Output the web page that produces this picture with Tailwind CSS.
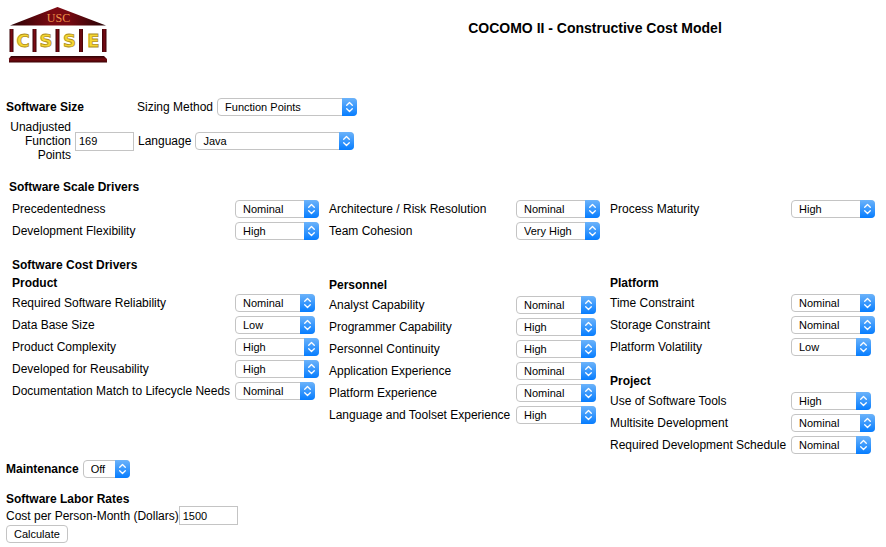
<!DOCTYPE html>
<html lang="en">
<head>
<meta charset="utf-8">
<meta name="viewport" content="width=device-width, initial-scale=1">
<title>COCOMO II - Constructive Cost Model</title>
<script src="https://cdn.jsdelivr.net/npm/@tailwindcss/browser@4"></script>
</head>
<body class="bg-white text-black font-['Liberation_Sans',Arial,sans-serif] text-[12px] leading-[14px]">

<svg class="absolute h-0 w-0" aria-hidden="true">
  <defs>
    <linearGradient id="blue" x1="0" y1="0" x2="0" y2="1"><stop offset="0" stop-color="#6cb3fa"/><stop offset="1" stop-color="#067dff"/></linearGradient>
  </defs>
  <symbol id="arrows" viewBox="0 0 15 18">
    <path d="M0 0h11a4 4 0 0 1 4 4v10a4 4 0 0 1-4 4H0z" fill="url(#blue)"/>
    <path d="M4.700 7.300 7.500 4.500l2.800 2.800M4.700 10.700l2.800 2.800 2.800-2.800" fill="none" stroke="#fff" stroke-width="1.300" stroke-linecap="round" stroke-linejoin="round"/>
  </symbol>
</svg>

<form>
<header class="flex items-start px-2 pt-1.5">
  <svg class="h-[58px] w-[100px] shrink-0" viewBox="8 6 100 58" role="img" aria-label="USC CSSE">
    <defs>
      <linearGradient id="roof" x1="0" y1="0" x2="1" y2="0"><stop offset="0" stop-color="#2a0205"/><stop offset=".45" stop-color="#7c0a12"/><stop offset=".6" stop-color="#780a12"/><stop offset="1" stop-color="#240204"/></linearGradient>
      <linearGradient id="base" x1="0" y1="0" x2="0" y2="1"><stop offset="0" stop-color="#2c0205"/><stop offset=".5" stop-color="#780a10"/><stop offset="1" stop-color="#3c0306"/></linearGradient>
      <linearGradient id="pillar" x1="0" y1="0" x2="1" y2="0"><stop offset="0" stop-color="#3a0408"/><stop offset=".5" stop-color="#7a0a12"/><stop offset="1" stop-color="#3a0408"/></linearGradient>
    </defs>
    <path d="M10 25.500 57.500 7 106 25.500z" fill="url(#roof)"/>
    <text x="58.500" y="22" text-anchor="middle" font-family="Liberation Serif" font-size="12" fill="#f0934a">USC</text>
    <g fill="url(#pillar)">
      <rect x="9.500" y="29" width="4" height="23"/><rect x="32.500" y="29" width="4" height="23"/><rect x="55.500" y="29" width="4" height="23"/><rect x="79" y="29" width="4" height="23"/><rect x="102" y="29" width="4.500" height="23"/>
    </g>
    <path d="M11 56h93l3 3v3.500H9V58.500z" fill="url(#base)"/>
    <g font-family="DejaVu Sans" font-weight="bold" font-size="18" text-anchor="middle" fill="#f5d631" stroke="#b0901c" stroke-width=".8">
      <text x="23" y="46.500">C</text><text x="46" y="46.500">S</text><text x="69.500" y="46.500">S</text><text x="93.500" y="46.500">E</text>
    </g>
  </svg>
  <h1 class="flex-1 pt-3.5 pl-60 pr-9 text-center text-[14px] leading-4 font-bold">COCOMO II - Constructive Cost Model</h1>
</header>

<section class="mt-[34px] px-1.5">
  <div class="flex items-center">
    <h2 class="w-[131px] font-bold">Software Size</h2>
    <label for="sizing" class="pr-1">Sizing Method</label>
    <span class="relative flex w-[140px]"><select id="sizing" class="h-[18px] w-full appearance-none rounded-[4px] border border-[#c4c4c4] bg-white pl-[7px] text-[11px] leading-4"><option>Function Points</option><option>Source Lines of Code</option></select><svg class="pointer-events-none absolute top-0 right-0 h-[18px] w-[15px]"><use href="#arrows"/></svg></span>
  </div>
  <div class="mt-1 flex items-center">
    <label for="ufp" class="w-[65px] text-right">Unadjusted Function Points</label>
    <input id="ufp" value="169" class="ml-1 h-[19px] w-[59px] border border-[#c4c4c4] pl-[3px] text-[11px]">
    <label for="lang" class="pr-1 pl-1">Language</label>
    <span class="relative flex w-[159px]"><select id="lang" class="h-[18px] w-full appearance-none rounded-[4px] border border-[#c4c4c4] bg-white pl-[7px] text-[11px] leading-4"><option>Java</option><option>C</option></select><svg class="pointer-events-none absolute top-0 right-0 h-[18px] w-[15px]"><use href="#arrows"/></svg></span>
  </div>
</section>

<section class="mt-[18px] pr-[11px] pl-3">
  <h2 class="-ml-[3px] font-bold">Software Scale Drivers</h2>
  <div class="mt-1 grid grid-cols-[307fr_271fr_265fr] gap-x-2.5">
    <div class="grid h-[22px] grid-cols-[1fr_84px] items-center"><label for="prec">Precedentedness</label><span class="relative flex w-[84px]"><select id="prec" data-rating class="h-[18px] w-full appearance-none rounded-[4px] border border-[#c4c4c4] bg-white pl-[7px] text-[11px] leading-4"><option>Nominal</option></select><svg class="pointer-events-none absolute top-0 right-0 h-[18px] w-[15px]"><use href="#arrows"/></svg></span></div>
    <div class="grid h-[22px] grid-cols-[1fr_84px] items-center"><label for="resl">Architecture / Risk Resolution</label><span class="relative flex w-[84px]"><select id="resl" data-rating class="h-[18px] w-full appearance-none rounded-[4px] border border-[#c4c4c4] bg-white pl-[7px] text-[11px] leading-4"><option>Nominal</option></select><svg class="pointer-events-none absolute top-0 right-0 h-[18px] w-[15px]"><use href="#arrows"/></svg></span></div>
    <div class="grid h-[22px] grid-cols-[1fr_84px] items-center"><label for="pmat">Process Maturity</label><span class="relative flex w-[84px]"><select id="pmat" data-rating class="h-[18px] w-full appearance-none rounded-[4px] border border-[#c4c4c4] bg-white pl-[7px] text-[11px] leading-4"><option>High</option></select><svg class="pointer-events-none absolute top-0 right-0 h-[18px] w-[15px]"><use href="#arrows"/></svg></span></div>
    <div class="grid h-[22px] grid-cols-[1fr_84px] items-center"><label for="flex">Development Flexibility</label><span class="relative flex w-[84px]"><select id="flex" data-rating class="h-[18px] w-full appearance-none rounded-[4px] border border-[#c4c4c4] bg-white pl-[7px] text-[11px] leading-4"><option>High</option></select><svg class="pointer-events-none absolute top-0 right-0 h-[18px] w-[15px]"><use href="#arrows"/></svg></span></div>
    <div class="grid h-[22px] grid-cols-[1fr_84px] items-center"><label for="team">Team Cohesion</label><span class="relative flex w-[84px]"><select id="team" data-rating class="h-[18px] w-full appearance-none rounded-[4px] border border-[#c4c4c4] bg-white pl-[7px] text-[11px] leading-4"><option>Very High</option></select><svg class="pointer-events-none absolute top-0 right-0 h-[18px] w-[15px]"><use href="#arrows"/></svg></span></div>
  </div>
</section>

<section class="mt-4 pr-[11px] pl-3">
  <h2 class="font-bold">Software Cost Drivers</h2>
  <div class="grid grid-cols-[307fr_271fr_265fr] gap-x-2.5">
    <div class="pt-1">
      <h3 class="mb-0.5 font-bold">Product</h3>
      <div class="grid h-[22px] grid-cols-[1fr_84px] items-center"><label for="rely">Required Software Reliability</label><span class="relative flex w-[80px]"><select id="rely" data-rating class="h-[18px] w-full appearance-none rounded-[4px] border border-[#c4c4c4] bg-white pl-[7px] text-[11px] leading-4"><option>Nominal</option></select><svg class="pointer-events-none absolute top-0 right-0 h-[18px] w-[15px]"><use href="#arrows"/></svg></span></div>
      <div class="grid h-[22px] grid-cols-[1fr_84px] items-center"><label for="data">Data Base Size</label><span class="relative flex w-[80px]"><select id="data" data-rating class="h-[18px] w-full appearance-none rounded-[4px] border border-[#c4c4c4] bg-white pl-[7px] text-[11px] leading-4"><option>Low</option></select><svg class="pointer-events-none absolute top-0 right-0 h-[18px] w-[15px]"><use href="#arrows"/></svg></span></div>
      <div class="grid h-[22px] grid-cols-[1fr_84px] items-center"><label for="cplx">Product Complexity</label><span class="relative flex w-[84px]"><select id="cplx" data-rating class="h-[18px] w-full appearance-none rounded-[4px] border border-[#c4c4c4] bg-white pl-[7px] text-[11px] leading-4"><option>High</option></select><svg class="pointer-events-none absolute top-0 right-0 h-[18px] w-[15px]"><use href="#arrows"/></svg></span></div>
      <div class="grid h-[22px] grid-cols-[1fr_84px] items-center"><label for="ruse">Developed for Reusability</label><span class="relative flex w-[84px]"><select id="ruse" data-rating class="h-[18px] w-full appearance-none rounded-[4px] border border-[#c4c4c4] bg-white pl-[7px] text-[11px] leading-4"><option>High</option></select><svg class="pointer-events-none absolute top-0 right-0 h-[18px] w-[15px]"><use href="#arrows"/></svg></span></div>
      <div class="grid h-[22px] grid-cols-[1fr_84px] items-center"><label for="docu">Documentation Match to Lifecycle Needs</label><span class="relative flex w-[80px]"><select id="docu" data-rating class="h-[18px] w-full appearance-none rounded-[4px] border border-[#c4c4c4] bg-white pl-[7px] text-[11px] leading-4"><option>Nominal</option></select><svg class="pointer-events-none absolute top-0 right-0 h-[18px] w-[15px]"><use href="#arrows"/></svg></span></div>
    </div>
    <div class="pt-1.5">
      <h3 class="mb-0.5 font-bold">Personnel</h3>
      <div class="grid h-[22px] grid-cols-[1fr_84px] items-center"><label for="acap">Analyst Capability</label><span class="relative flex w-[80px]"><select id="acap" data-rating class="h-[18px] w-full appearance-none rounded-[4px] border border-[#c4c4c4] bg-white pl-[7px] text-[11px] leading-4"><option>Nominal</option></select><svg class="pointer-events-none absolute top-0 right-0 h-[18px] w-[15px]"><use href="#arrows"/></svg></span></div>
      <div class="grid h-[22px] grid-cols-[1fr_84px] items-center"><label for="pcap">Programmer Capability</label><span class="relative flex w-[80px]"><select id="pcap" data-rating class="h-[18px] w-full appearance-none rounded-[4px] border border-[#c4c4c4] bg-white pl-[7px] text-[11px] leading-4"><option>High</option></select><svg class="pointer-events-none absolute top-0 right-0 h-[18px] w-[15px]"><use href="#arrows"/></svg></span></div>
      <div class="grid h-[22px] grid-cols-[1fr_84px] items-center"><label for="pcon">Personnel Continuity</label><span class="relative flex w-[80px]"><select id="pcon" data-rating class="h-[18px] w-full appearance-none rounded-[4px] border border-[#c4c4c4] bg-white pl-[7px] text-[11px] leading-4"><option>High</option></select><svg class="pointer-events-none absolute top-0 right-0 h-[18px] w-[15px]"><use href="#arrows"/></svg></span></div>
      <div class="grid h-[22px] grid-cols-[1fr_84px] items-center"><label for="apex">Application Experience</label><span class="relative flex w-[80px]"><select id="apex" data-rating class="h-[18px] w-full appearance-none rounded-[4px] border border-[#c4c4c4] bg-white pl-[7px] text-[11px] leading-4"><option>Nominal</option></select><svg class="pointer-events-none absolute top-0 right-0 h-[18px] w-[15px]"><use href="#arrows"/></svg></span></div>
      <div class="grid h-[22px] grid-cols-[1fr_84px] items-center"><label for="plex">Platform Experience</label><span class="relative flex w-[80px]"><select id="plex" data-rating class="h-[18px] w-full appearance-none rounded-[4px] border border-[#c4c4c4] bg-white pl-[7px] text-[11px] leading-4"><option>Nominal</option></select><svg class="pointer-events-none absolute top-0 right-0 h-[18px] w-[15px]"><use href="#arrows"/></svg></span></div>
      <div class="grid h-[22px] grid-cols-[1fr_84px] items-center"><label for="ltex">Language and Toolset Experience</label><span class="relative flex w-[80px]"><select id="ltex" data-rating class="h-[18px] w-full appearance-none rounded-[4px] border border-[#c4c4c4] bg-white pl-[7px] text-[11px] leading-4"><option>High</option></select><svg class="pointer-events-none absolute top-0 right-0 h-[18px] w-[15px]"><use href="#arrows"/></svg></span></div>
    </div>
    <div class="pt-1">
      <h3 class="mb-0.5 font-bold">Platform</h3>
      <div class="grid h-[22px] grid-cols-[1fr_84px] items-center"><label for="time">Time Constraint</label><span class="relative flex w-[84px]"><select id="time" data-rating class="h-[18px] w-full appearance-none rounded-[4px] border border-[#c4c4c4] bg-white pl-[7px] text-[11px] leading-4"><option>Nominal</option></select><svg class="pointer-events-none absolute top-0 right-0 h-[18px] w-[15px]"><use href="#arrows"/></svg></span></div>
      <div class="grid h-[22px] grid-cols-[1fr_84px] items-center"><label for="stor">Storage Constraint</label><span class="relative flex w-[84px]"><select id="stor" data-rating class="h-[18px] w-full appearance-none rounded-[4px] border border-[#c4c4c4] bg-white pl-[7px] text-[11px] leading-4"><option>Nominal</option></select><svg class="pointer-events-none absolute top-0 right-0 h-[18px] w-[15px]"><use href="#arrows"/></svg></span></div>
      <div class="grid h-[22px] grid-cols-[1fr_84px] items-center"><label for="pvol">Platform Volatility</label><span class="relative flex w-[80px]"><select id="pvol" data-rating class="h-[18px] w-full appearance-none rounded-[4px] border border-[#c4c4c4] bg-white pl-[7px] text-[11px] leading-4"><option>Low</option></select><svg class="pointer-events-none absolute top-0 right-0 h-[18px] w-[15px]"><use href="#arrows"/></svg></span></div>
      <h3 class="mt-4 mb-0.5 font-bold">Project</h3>
      <div class="grid h-[22px] grid-cols-[1fr_84px] items-center"><label for="tool">Use of Software Tools</label><span class="relative flex w-[80px]"><select id="tool" data-rating class="h-[18px] w-full appearance-none rounded-[4px] border border-[#c4c4c4] bg-white pl-[7px] text-[11px] leading-4"><option>High</option></select><svg class="pointer-events-none absolute top-0 right-0 h-[18px] w-[15px]"><use href="#arrows"/></svg></span></div>
      <div class="grid h-[22px] grid-cols-[1fr_84px] items-center"><label for="site">Multisite Development</label><span class="relative flex w-[84px]"><select id="site" data-rating class="h-[18px] w-full appearance-none rounded-[4px] border border-[#c4c4c4] bg-white pl-[7px] text-[11px] leading-4"><option>Nominal</option></select><svg class="pointer-events-none absolute top-0 right-0 h-[18px] w-[15px]"><use href="#arrows"/></svg></span></div>
      <div class="grid h-[22px] grid-cols-[1fr_84px] items-center"><label for="sced">Required Development Schedule</label><span class="relative flex w-[80px]"><select id="sced" data-rating class="h-[18px] w-full appearance-none rounded-[4px] border border-[#c4c4c4] bg-white pl-[7px] text-[11px] leading-4"><option>Nominal</option></select><svg class="pointer-events-none absolute top-0 right-0 h-[18px] w-[15px]"><use href="#arrows"/></svg></span></div>
    </div>
  </div>
</section>

<section class="mt-1 px-1.5">
  <div class="flex items-center">
    <label for="maint" class="pr-1 font-bold">Maintenance</label>
    <span class="relative flex w-[47px]"><select id="maint" class="h-[18px] w-full appearance-none rounded-[4px] border border-[#c4c4c4] bg-white pl-[7px] text-[11px] leading-4"><option>Off</option><option>On</option></select><svg class="pointer-events-none absolute top-0 right-0 h-[18px] w-[15px]"><use href="#arrows"/></svg></span>
  </div>
  <h2 class="mt-3.5 font-bold">Software Labor Rates</h2>
  <div class="flex items-center">
    <label for="cost">Cost per Person-Month (Dollars)</label>
    <input id="cost" value="1500" class="h-[19px] w-[59px] border border-[#c4c4c4] pl-[3px] text-[11px]">
  </div>
  <button type="button" class="block h-[18px] rounded-[4px] border border-[#c4c4c4] bg-white px-[7px] text-[11px] leading-4">Calculate</button>
</section>
</form>

<script>
// Complete each rating list around the rating it starts with.
const ratings = ["Very Low", "Low", "Nominal", "High", "Very High", "Extra High"];
document.querySelectorAll("select[data-rating]").forEach(s => {
  const current = s.value;
  s.replaceChildren(...ratings.map(r => new Option(r, r, r === current, r === current)));
});
</script>
</body>
</html>
